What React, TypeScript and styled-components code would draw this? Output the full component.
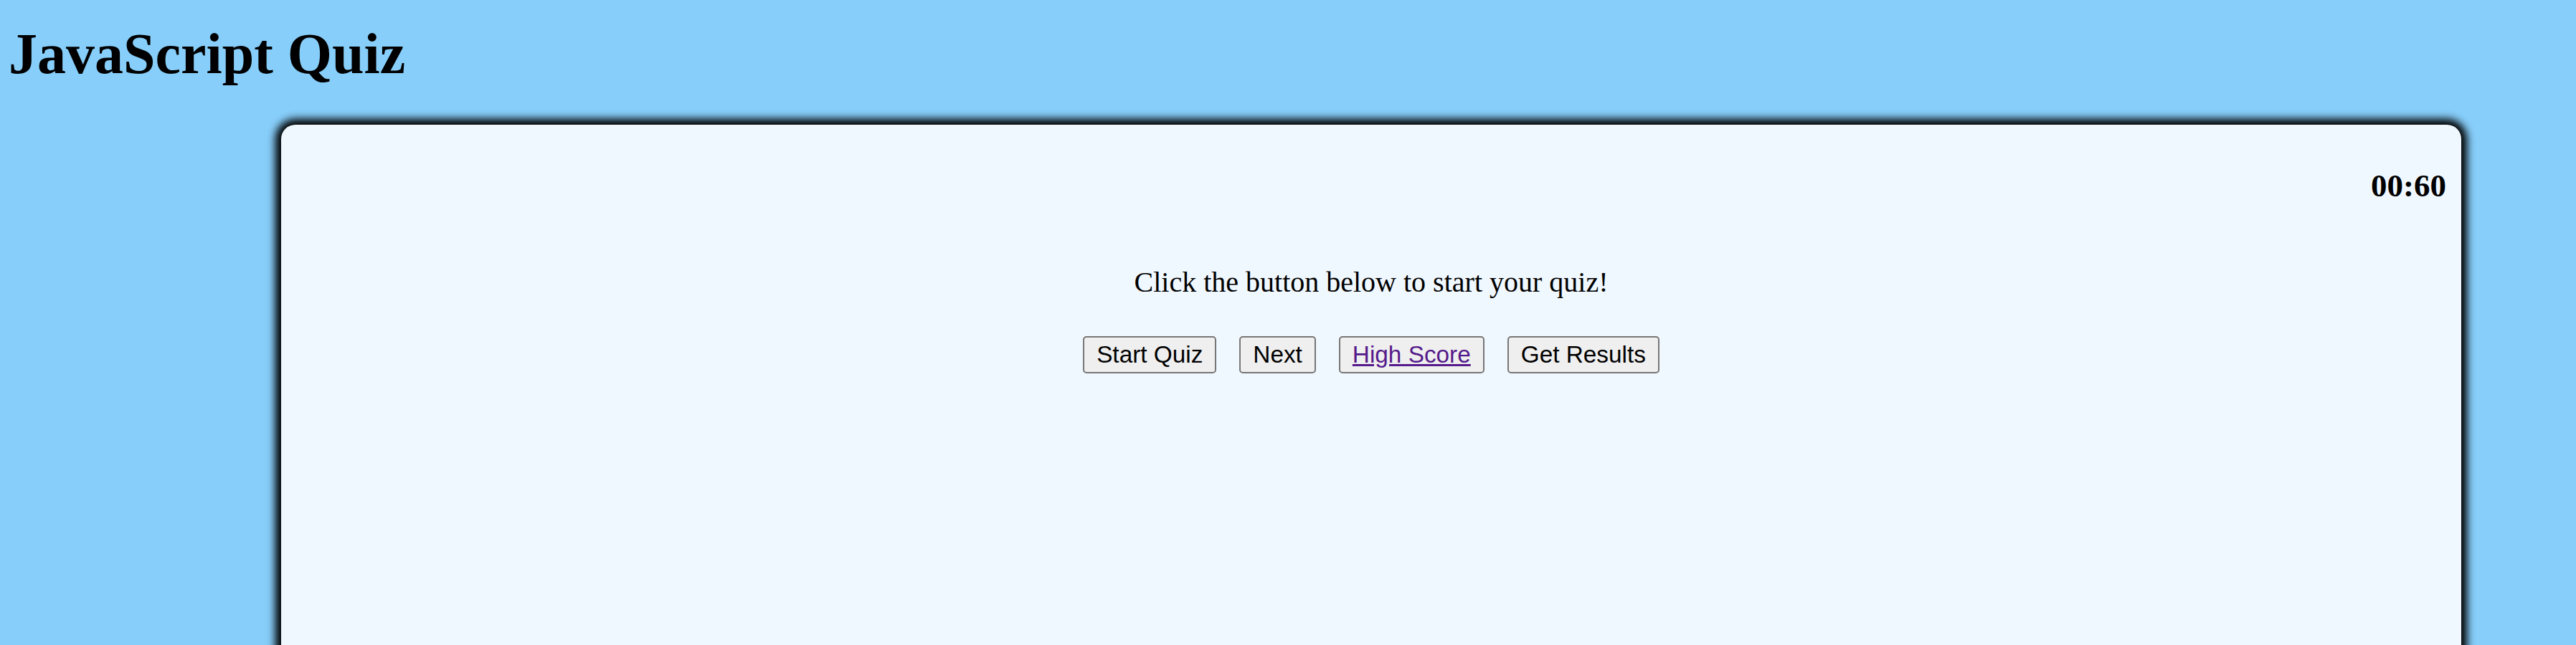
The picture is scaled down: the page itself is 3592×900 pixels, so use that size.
import React from "react";
import styled, { createGlobalStyle } from "styled-components";

const GlobalStyle = createGlobalStyle`
  html, body {
    margin: 0;
    padding: 0;
    background: #87cefa;
  }
  body {
    font-family: "Liberation Serif", "Times New Roman", serif;
    color: #000;
  }
`;

const Page = styled.div`
  min-height: 900px;
  background: #87cefa;
  overflow: hidden;
`;

const Title = styled.h1`
  margin: 29px 0 53px 12px;
  font-family: "Liberation Serif", "Times New Roman", serif;
  font-size: 80px;
  font-weight: bold;
  line-height: 92px;
`;

const Card = styled.main`
  box-sizing: border-box;
  width: 3040px;
  min-height: 900px;
  margin-left: 392px;
  padding: 59px 21px 40px 21px;
  background: #f0f8ff;
  border-radius: 20px;
  box-shadow: 0 0 12px 8px #000;
  display: flex;
  flex-direction: column;
  align-items: stretch;
`;

const Timer = styled.div`
  align-self: flex-end;
  font-size: 45px;
  font-weight: bold;
  line-height: 52px;
`;

const Intro = styled.p`
  margin: 86px 0 0;
  text-align: center;
  font-size: 40px;
  line-height: 46px;
`;

const ButtonRow = styled.div`
  margin-top: 52px;
  display: flex;
  justify-content: center;
  gap: 32px;
`;

const Button = styled.button`
  box-sizing: border-box;
  height: 52px;
  padding: 0 17px;
  border: 2px solid #767676;
  border-radius: 5px;
  background: #efefef;
  color: #000;
  font-family: "Liberation Sans", Arial, sans-serif;
  font-size: 33.33px;
  line-height: 38px;
  cursor: pointer;
`;

const ButtonLink = styled.a`
  color: #551a8b;
  text-decoration: underline;
`;

export default function App() {
  return (
    <>
      <GlobalStyle />
      <Page>
        <Title>JavaScript Quiz</Title>
        <Card>
          <Timer>00:60</Timer>
          <Intro>Click the button below to start your quiz!</Intro>
          <ButtonRow>
            <Button>Start Quiz</Button>
            <Button>Next</Button>
            <Button>
              <ButtonLink href="#">High Score</ButtonLink>
            </Button>
            <Button>Get Results</Button>
          </ButtonRow>
        </Card>
      </Page>
    </>
  );
}
